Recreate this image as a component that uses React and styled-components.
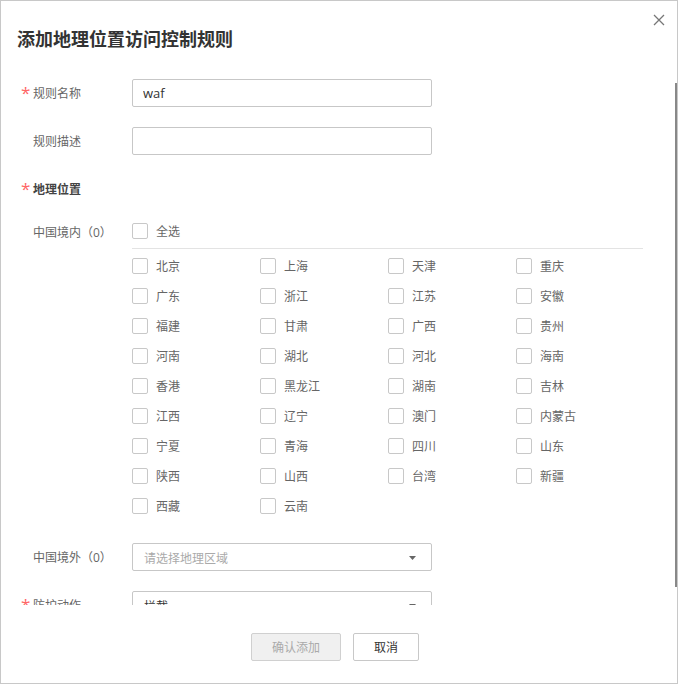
import React from 'react';
import styled, { createGlobalStyle } from 'styled-components';

const GlobalStyle = createGlobalStyle`
  html, body { margin: 0; padding: 0; background: #fff; }
  body { font-family: "Open Sans", "Noto Sans CJK SC", sans-serif; }
  *, *::before, *::after { box-sizing: border-box; }
`;

const Dialog = styled.div`
  position: relative;
  width: 678px;
  height: 684px;
  border: 1px solid #c8c8c8;
  background: #fff;
  display: flex;
  flex-direction: column;
  font-family: "Open Sans", "Noto Sans CJK SC", sans-serif;
`;

const Header = styled.header`
  flex: none;
  height: 61px;
  padding: 25px 0 0 16px;
`;

const Title = styled.h2`
  margin: 0;
  font-size: 18px;
  line-height: 26px;
  font-weight: 700;
  color: #333;
`;

const CloseButton = styled.button`
  position: absolute;
  top: 13px;
  right: 12px;
  width: 12px;
  height: 12px;
  padding: 0;
  border: 0;
  background: transparent;
  display: flex;
  cursor: pointer;
`;

const Body = styled.div`
  flex: 1;
  overflow: hidden;
  padding: 17px 0 0 19px;
`;

const FormItem = styled.div`
  display: flex;
  align-items: ${(p) => (p.$top ? 'flex-start' : 'center')};
  min-height: 28px;
  margin-bottom: 20px;
`;

const Label = styled.div`
  flex: none;
  width: 112px;
  display: flex;
  align-items: center;
  padding-top: ${(p) => (p.$top ? 1 : 2)}px;
  font-size: 12px;
  line-height: 18px;
  color: ${(p) => (p.$strong ? '#444' : '#666')};
  font-weight: ${(p) => (p.$strong ? 700 : 400)};
`;

const Marker = styled.span`
  flex: none;
  width: 13px;
  padding-left: 1px;
  color: #f66;
  font-family: "Open Sans", sans-serif;
  font-weight: 400;
  font-size: 17px;
  line-height: 18px;
  position: relative;
  top: -1px;
`;

const TextInput = styled.input`
  width: 300px;
  height: 28px;
  border: 1px solid #c7c7c7;
  border-radius: 2px;
  padding: 0 10px;
  font-family: inherit;
  font-size: 13px;
  color: #333;
  outline: none;
  background: #fff;
`;

const Select = styled.div`
  width: 300px;
  height: 28px;
  border: 1px solid #c7c7c7;
  border-radius: 2px;
  padding: 1px 15px 0 11px;
  display: flex;
  align-items: center;
  justify-content: space-between;
  font-size: 12px;
  color: ${(p) => (p.$placeholder ? '#aaa' : '#333')};
`;

const CheckGroup = styled.div`
  width: 511px;
`;

const AllRow = styled.div`
  display: flex;
  align-items: center;
  height: 25px;
  align-items: flex-start;
  border-bottom: 1px solid #e3e3e3;
  box-sizing: content-box;
`;

const Grid = styled.div`
  display: grid;
  grid-template-columns: repeat(4, 128px);
  grid-auto-rows: 30px;
  align-items: center;
  padding: 2px 0;
`;

const CheckItem = styled.label`
  display: flex;
  align-items: center;
  gap: 8px;
  height: 16px;
  font-size: 12px;
  color: #666;
  cursor: pointer;
`;

const CheckText = styled.span`
  padding-top: 2px;
  line-height: 14px;
`;

const Box = styled.span`
  flex: none;
  width: 16px;
  height: 16px;
  border: 1px solid #c8c8c8;
  border-radius: 2px;
  background: #fff;
`;

const Footer = styled.footer`
  flex: none;
  height: 78px;
  padding: 28px 8px 0 0;
  display: flex;
  justify-content: center;
  gap: 12px;
`;

const Button = styled.button`
  height: 28px;
  padding: 0 20px;
  border: 1px solid ${(p) => (p.$disabled ? '#d0d0d0' : '#c8c8c8')};
  border-radius: 2px;
  background: ${(p) => (p.$disabled ? '#f0f0f0' : '#fff')};
  color: ${(p) => (p.$disabled ? '#aaa' : '#333')};
  font-family: inherit;
  font-size: 12px;
  cursor: ${(p) => (p.$disabled ? 'not-allowed' : 'pointer')};
`;

const ScrollThumb = styled.div`
  position: absolute;
  right: 0;
  top: 82px;
  width: 2px;
  height: 504px;
  background: #888;
`;

const Caret = () => (
  <svg width="7" height="4" viewBox="0 0 7 4">
    <path d="M0 0 L7 0 L3.5 4 Z" fill="#666" />
  </svg>
);

const regions = [
  '北京', '上海', '天津', '重庆',
  '广东', '浙江', '江苏', '安徽',
  '福建', '甘肃', '广西', '贵州',
  '河南', '湖北', '河北', '海南',
  '香港', '黑龙江', '湖南', '吉林',
  '江西', '辽宁', '澳门', '内蒙古',
  '宁夏', '青海', '四川', '山东',
  '陕西', '山西', '台湾', '新疆',
  '西藏', '云南',
];

const Check = ({ children }) => (
  <CheckItem>
    <Box />
    <CheckText>{children}</CheckText>
  </CheckItem>
);

export default function App() {
  return (
    <>
      <GlobalStyle />
      <Dialog>
        <Header>
          <Title>添加地理位置访问控制规则</Title>
        </Header>
        <CloseButton aria-label="关闭">
          <svg width="12" height="12" viewBox="0 0 12 12">
            <path d="M1 1 L11 11 M11 1 L1 11" stroke="#777" strokeWidth="1.3" fill="none" />
          </svg>
        </CloseButton>
        <Body>
          <FormItem>
            <Label><Marker>*</Marker>规则名称</Label>
            <TextInput defaultValue="waf" />
          </FormItem>
          <FormItem>
            <Label><Marker />规则描述</Label>
            <TextInput />
          </FormItem>
          <FormItem>
            <Label $strong><Marker>*</Marker>地理位置</Label>
          </FormItem>
          <FormItem $top>
            <Label $top><Marker />中国境内（0）</Label>
            <CheckGroup>
              <AllRow>
                <Check>全选</Check>
              </AllRow>
              <Grid>
                {regions.map((r) => (
                  <Check key={r}>{r}</Check>
                ))}
              </Grid>
            </CheckGroup>
          </FormItem>
          <FormItem>
            <Label><Marker />中国境外（0）</Label>
            <Select $placeholder>
              <span>请选择地理区域</span>
              <Caret />
            </Select>
          </FormItem>
          <FormItem>
            <Label><Marker>*</Marker>防护动作</Label>
            <Select>
              <span>拦截</span>
              <Caret />
            </Select>
          </FormItem>
        </Body>
        <Footer>
          <Button $disabled disabled>确认添加</Button>
          <Button>取消</Button>
        </Footer>
        <ScrollThumb />
      </Dialog>
    </>
  );
}
